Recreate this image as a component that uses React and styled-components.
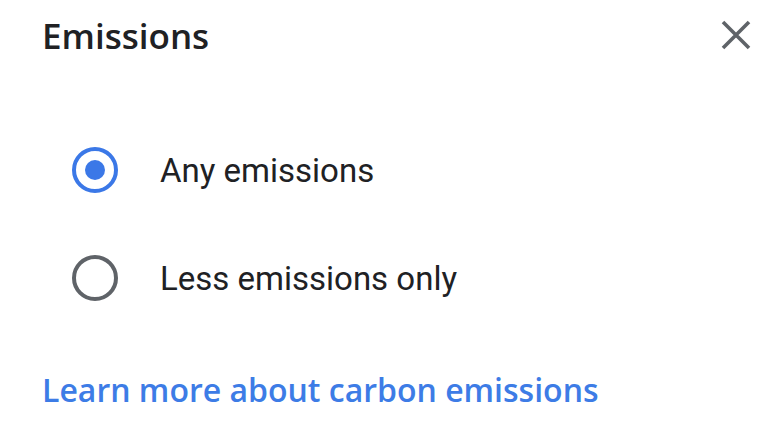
import React, { useState } from "react";
import styled, { createGlobalStyle } from "styled-components";

const Global = createGlobalStyle`
  html, body { margin: 0; padding: 0; background: #fff; }
  body { font-family: Roboto, "Noto Sans", sans-serif; }
`;

const Dialog = styled.div`
  width: 770px;
  height: 431px;
  box-sizing: border-box;
  display: flex;
  flex-direction: column;
  background: #fff;
`;

const Header = styled.div`
  display: flex;
  align-items: center;
  justify-content: space-between;
  height: 70px;
  padding: 0 18px 0 42px;
`;

const Title = styled.h1`
  margin: 0;
  font-family: "Open Sans", Roboto, sans-serif;
  font-weight: 600;
  font-size: 35px;
  color: #202124;
  letter-spacing: 0;
`;

const CloseButton = styled.button`
  border: 0;
  background: transparent;
  padding: 0;
  width: 32px;
  height: 32px;
  display: flex;
  align-items: center;
  justify-content: center;
  cursor: pointer;
`;

const Options = styled.div`
  display: flex;
  flex-direction: column;
  padding: 77px 0 0 72px;
  gap: 62px;
`;

const Option = styled.label`
  display: flex;
  align-items: center;
  gap: 42px;
  cursor: pointer;
  height: 46px;
`;

const Radio = styled.span`
  box-sizing: border-box;
  width: 46px;
  height: 46px;
  border-radius: 50%;
  border: 4.5px solid ${(p) => (p.$checked ? "#3b78e7" : "#5f6368")};
  display: flex;
  align-items: center;
  justify-content: center;
  &::after {
    content: "";
    width: 20px;
    height: 20px;
    border-radius: 50%;
    background: #3b78e7;
    display: ${(p) => (p.$checked ? "block" : "none")};
  }
`;

const OptionText = styled.span`
  font-family: Roboto, sans-serif;
  font-size: 33px;
  color: #202124;
`;

const Footer = styled.div`
  padding: 67px 0 0 42px;
`;

const Link = styled.a`
  font-family: "Open Sans", Roboto, sans-serif;
  font-weight: 600;
  font-size: 32px;
  color: #3d7ce6;
  text-decoration: none;
`;

const options = ["Any emissions", "Less emissions only"];

export default function App() {
  const [sel, setSel] = useState(0);
  return (
    <Dialog>
      <Global />
      <Header>
        <Title>Emissions</Title>
        <CloseButton aria-label="Close">
          <svg width="32" height="32" viewBox="0 0 32 32">
            <path d="M3 3L29 29M29 3L3 29" stroke="#5f6368" strokeWidth="3.6" />
          </svg>
        </CloseButton>
      </Header>
      <Options>
        {options.map((o, i) => (
          <Option key={o} onClick={() => setSel(i)}>
            <Radio $checked={sel === i} />
            <OptionText>{o}</OptionText>
          </Option>
        ))}
      </Options>
      <Footer>
        <Link href="#">Learn more about carbon emissions</Link>
      </Footer>
    </Dialog>
  );
}
